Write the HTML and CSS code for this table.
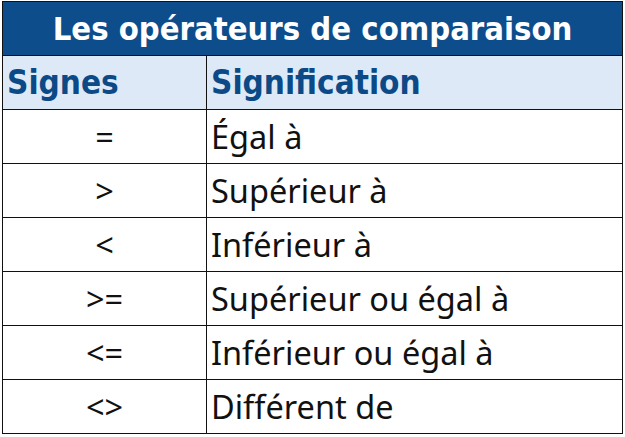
FILE: index.html
```html
<!DOCTYPE html>
<html lang="fr">
<head>
<meta charset="utf-8">
<link rel="stylesheet" href="styles.css">
</head>
<body>
<table class="ops">
  <colgroup><col class="c1"><col class="c2"></colgroup>
  <thead>
    <tr><th colspan="2" class="title">Les opérateurs de comparaison</th></tr>
    <tr class="head"><th class="h1">Signes</th><th class="h2">Signification</th></tr>
  </thead>
  <tbody>
    <tr><td class="sign">=</td><td class="mean">Égal à</td></tr>
    <tr><td class="sign">&gt;</td><td class="mean">Supérieur à</td></tr>
    <tr><td class="sign">&lt;</td><td class="mean">Inférieur à</td></tr>
    <tr><td class="sign">&gt;=</td><td class="mean">Supérieur ou égal à</td></tr>
    <tr><td class="sign">&lt;=</td><td class="mean">Inférieur ou égal à</td></tr>
    <tr><td class="sign">&lt;&gt;</td><td class="mean">Différent de</td></tr>
  </tbody>
</table>
</body>
</html>
```
FILE: styles.css
```css
html, body { margin: 0; padding: 0; background: #fff; }
body { padding: 1px 0 0 2px; }
.ops {
  border-collapse: collapse;
  width: 620px;
  table-layout: fixed;
  font-family: "Noto Sans", "Liberation Sans", sans-serif;
}
.c1 { width: 204px; }
.c2 { width: 416px; }
.ops th, .ops td {
  border: 1.5px solid #111;
  padding: 0;
}
.ops .title {
  background: #0d4d8c;
  color: #fff;
  font-family: "DejaVu Sans Condensed", sans-serif;
  font-weight: bold;
  font-size: 32.5px;
  height: 53px;
  text-align: center;
}
.ops .head th {
  background: #dde9f6;
  color: #0b4a86;
  font-family: "DejaVu Sans Condensed", sans-serif;
  font-weight: bold;
  font-size: 33px;
  height: 53px;
  text-align: left;
  padding-left: 4px;
}
.ops td {
  height: 53px;
  font-size: 32.5px;
  color: #111;
}
.ops .sign { text-align: center; }
.ops .mean { padding-left: 4px; }
```
